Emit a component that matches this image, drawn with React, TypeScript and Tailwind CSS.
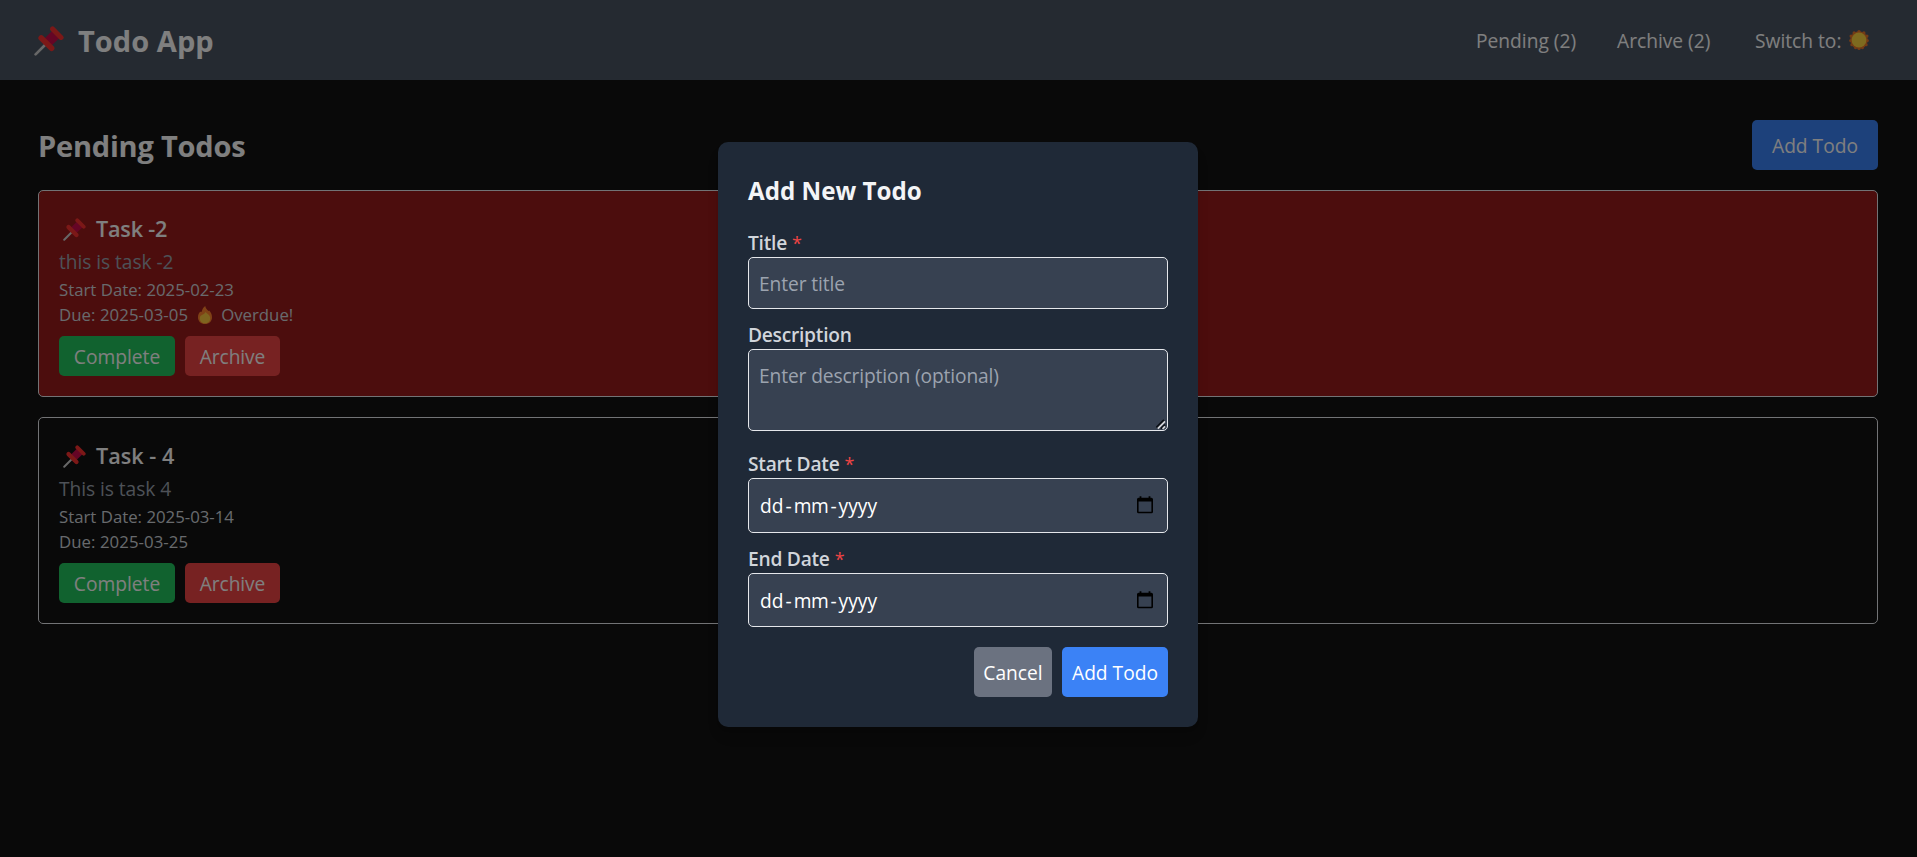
import type { ReactNode } from "react";

function Pushpin({ className }: { className: string }) {
  return (
    <svg viewBox="0 0 30 30" className={className} fill="none" aria-hidden="true">
      <path d="M1.6 28.4 L11 19" stroke="#cfcfcf" strokeWidth="2.6" strokeLinecap="round" />
      <path d="M10.5 12.5 L18 5 L25.5 12 L17.5 19.5 Z" fill="#ca0b4a" />
      <path d="M7.2 11.9 L17.6 22.3" stroke="#f8312f" strokeWidth="5.6" strokeLinecap="round" />
      <path d="M18.6 3 L27 11.4" stroke="#f8312f" strokeWidth="5" strokeLinecap="round" />
    </svg>
  );
}

function Sun({ className }: { className: string }) {
  return (
    <svg viewBox="0 0 20 20" className={className} aria-hidden="true">
      <g fill="#e8762a">
        <circle cx="10" cy="10" r="8.7" />
        <circle cx="10" cy="1.6" r="1.6" />
        <circle cx="14.9" cy="2.9" r="1.6" />
        <circle cx="17.9" cy="6.1" r="1.6" />
        <circle cx="18.3" cy="10.6" r="1.6" />
        <circle cx="17.1" cy="14.7" r="1.6" />
        <circle cx="13.5" cy="17.6" r="1.6" />
        <circle cx="10" cy="18.4" r="1.6" />
        <circle cx="6.5" cy="17.6" r="1.6" />
        <circle cx="2.9" cy="14.7" r="1.6" />
        <circle cx="1.7" cy="10.6" r="1.6" />
        <circle cx="2.1" cy="6.1" r="1.6" />
        <circle cx="5.1" cy="2.9" r="1.6" />
      </g>
      <circle cx="10" cy="10" r="7.4" fill="#fcd53f" />
    </svg>
  );
}

function Fire({ className }: { className: string }) {
  return (
    <svg viewBox="0 0 14 18" className={className} aria-hidden="true">
      <path
        d="M7.2 0 C7.6 2.2 9 3.4 10 4.6 C10.6 5.3 11 4.9 11.2 4.6 C12.9 6.6 14 8.6 14 11.2 C14 15.2 11 18 7 18 C3 18 0 15.2 0 11.2 C0 8.6 1.2 7 2.4 5.6 C2.9 6.4 3.3 6.2 3.7 5.4 C4.4 3.6 5 1.6 7.2 0 Z"
        fill="#ff822d"
      />
      <path
        d="M7.4 6 C8.6 7.2 9.6 7.8 10.6 8.8 C11.6 9.8 12.2 11 12.2 12.4 C12.2 15.2 10 17.2 7 17.2 C4 17.2 1.8 15.2 1.8 12.4 C1.8 10.4 3 9.4 4.4 8.8 C5.8 8.2 6.8 7.6 7.4 6 Z"
        fill="#fcc83f"
      />
    </svg>
  );
}

function CalendarIcon() {
  return (
    <svg viewBox="0 0 16 18" className="h-[18px] w-4" aria-hidden="true">
      <path
        d="M2.6 0.3 H4.4 V1.7 H11.6 V0.3 H13.4 V1.7 H14.4 Q16 1.7 16 3.2 V15.8 Q16 17.3 14.4 17.3 H1.6 Q0 17.3 0 15.8 V3.2 Q0 1.7 1.6 1.7 H2.6 Z M1.6 5.6 V15.7 H14.4 V5.6 Z"
        fill="#000"
        fillRule="evenodd"
      />
    </svg>
  );
}

function ResizeHandle() {
  return (
    <svg viewBox="0 0 11 11" className="absolute right-0 bottom-0 size-[11px]" fill="none" aria-hidden="true">
      <path d="M0.5 8.5 L8 1 M4.8 9.6 L9 5.6" stroke="#0b0f16" strokeWidth="2" />
      <path d="M1.8 9.6 L9 2.4 M6.6 9.8 L9 7.4" stroke="#d5d7da" strokeWidth="1.7" />
    </svg>
  );
}

interface Todo {
  title: string;
  description: string;
  start: string;
  due: string;
  overdue: boolean;
}

const todos: Todo[] = [
  { title: "Task -2", description: "this is task -2", start: "2025-02-23", due: "2025-03-05", overdue: true },
  { title: "Task - 4", description: "This is task 4", start: "2025-03-14", due: "2025-03-25", overdue: false },
];

function TodoCard({ todo }: { todo: Todo }) {
  return (
    <article
      className={`h-[207px] rounded-[5px] border border-[#e5e7eb] p-5 ${todo.overdue ? "bg-[#991b1b]" : "bg-[#121212]"}`}
    >
      <h3 className="flex h-[35px] items-start pl-[4px] text-[21.6px] leading-[35px] font-semibold text-white">
        <Pushpin className="mt-[7px] mr-[10px] size-[23px]" />
        <span className={todo.overdue ? "tracking-[-0.2px]" : "tracking-[0.03px]"}>{todo.title}</span>
      </h3>
      <p className="h-[30px] pt-px text-[19.2px] leading-[30px] tracking-[-0.06px] text-[#9ca3af]">{todo.description}</p>
      <p className="h-[25px] pt-px text-[16.8px] leading-[25px] text-[#d1d5db]">Start Date: {todo.start}</p>
      <p className="flex h-[25px] items-start pt-px text-[16.8px] leading-[25px] text-[#d1d5db]">
        <span className="tracking-[0.06px]">Due: {todo.due}</span>
        {todo.overdue && (
          <>
            <Fire className="mt-1 mr-[9px] ml-[10px] h-[18px] w-[14px]" />
            <span>Overdue!</span>
          </>
        )}
      </p>
      <div className="mt-[10px] flex gap-[10px]">
        <button className="h-10 w-[116px] rounded-[5px] bg-[#22c55e] pt-[3px] text-[19.2px] text-white">Complete</button>
        <button className="h-10 w-[95px] rounded-[5px] bg-[#ef4444] pt-[3px] text-[19.2px] tracking-[-0.08px] text-white">
          Archive
        </button>
      </div>
    </article>
  );
}

function Label({ children, required }: { children: ReactNode; required?: boolean }) {
  return (
    <div className="flex h-[30px] gap-[5px] pt-px text-[19.2px] leading-[30px] font-semibold tracking-[-0.25px] text-[#d1d5db]">
      <span>{children}</span>
      {required && <span className="text-[18px] font-medium text-[#ef4444]">*</span>}
    </div>
  );
}

function DateField({ className }: { className: string }) {
  return (
    <div
      className={`flex justify-between rounded-[5px] border border-[#e5e7eb] bg-[#374151] pr-[14px] pl-[11px] text-white ${className}`}
    >
      <span className="flex h-[52px] items-center pt-px text-[19.2px] leading-[30px]">
        <span>dd</span>
        <span className="px-[2px]">-</span>
        <span className="tracking-[-0.4px]">mm</span>
        <span className="px-[2px]">-</span>
        <span>yyyy</span>
      </span>
      <span className="pt-[17px]">
        <CalendarIcon />
      </span>
    </div>
  );
}

export default function App() {
  return (
    <div className="relative h-[857px] overflow-hidden bg-[#121212] font-['Open_Sans',sans-serif]">
      <header className="flex h-20 items-center justify-between bg-[#4b5563] pr-[48px] pl-[34px]">
        <div className="flex items-center">
          <Pushpin className="mt-[2px] mr-[14px] size-[30px]" />
          <h1 className="pt-px text-[29px] leading-[40px] font-bold tracking-[0.05px] text-white">Todo App</h1>
        </div>
        <nav className="flex items-center pt-[2px] text-[19.2px] leading-[30px] text-white">
          <span className="w-[141px]">Pending (2)</span>
          <span className="w-[138px]">Archive (2)</span>
          <span className="w-[94px]">Switch to:</span>
          <Sun className="mb-[2px] size-5" />
        </nav>
      </header>

      <main className="pt-10 pr-[39px] pl-[38px]">
        <div className="flex h-[50px] items-center justify-between">
          <h2 className="pt-[2px] text-[29px] leading-[40px] font-bold tracking-[-0.2px] text-white">Pending Todos</h2>
          <button className="h-[50px] w-[126px] rounded-[5px] bg-[#3b82f6] pt-[3px] text-[19.2px] text-white">Add Todo</button>
        </div>
        <div className="mt-5 flex flex-col gap-5">
          {todos.map((todo) => (
            <TodoCard key={todo.title} todo={todo} />
          ))}
        </div>
      </main>

      <div className="absolute inset-0 flex items-start bg-black/50 pt-[142px] pl-[718px]">
        <div className="h-[585px] w-[480px] rounded-[10px] bg-[#1f2937] p-[30px] shadow-lg">
          <h2 className="h-[35px] pt-px text-[24.2px] leading-[35px] font-bold text-[#f3f4f6]">Add New Todo</h2>
          <div className="mt-5">
            <Label required>Title</Label>
            <div className="h-[52px] rounded-[5px] border border-[#e5e7eb] bg-[#374151] px-[10px] pt-[11px] text-[19.2px] leading-[30px] tracking-[-0.1px] text-[#9ca3af]">
              Enter title
            </div>
          </div>
          <div className="mt-[10px]">
            <Label>Description</Label>
            <div className="relative h-[82px] rounded-[5px] border border-[#e5e7eb] bg-[#374151] px-[10px] pt-[11px] text-[19.2px] leading-[30px] tracking-[-0.12px] text-[#9ca3af]">
              Enter description (optional)
              <ResizeHandle />
            </div>
          </div>
          <div className="mt-[17px]">
            <Label required>Start Date</Label>
            <DateField className="h-[55px]" />
          </div>
          <div className="mt-[10px]">
            <Label required>End Date</Label>
            <DateField className="h-[54px]" />
          </div>
          <div className="mt-5 flex justify-end gap-[10px] text-[19.2px] text-white">
            <button className="h-[50px] w-[78px] rounded-[5px] bg-[#6b7280] pt-[3px]">Cancel</button>
            <button className="h-[50px] w-[106px] rounded-[5px] bg-[#3b82f6] pt-[3px]">Add Todo</button>
          </div>
        </div>
      </div>
    </div>
  );
}
